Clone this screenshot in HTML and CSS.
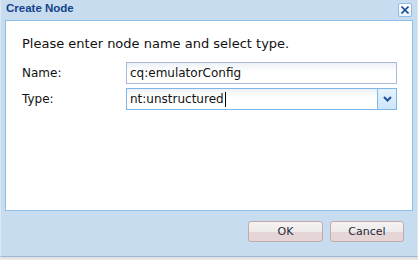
FILE: index.html
```html
<!DOCTYPE html>
<html lang="en">
  <head>
    <meta charset="UTF-8" />
    <title>Create Node</title>
    <link rel="stylesheet" href="styles.css">
  </head>

  <body>
    <div class="dialog">
      <div class="header">
        <span class="title">Create Node</span>
        <span class="close">
          <svg width="8" height="8" viewBox="0 0 8 8">
            <path d="M0.5 0.5 L7.5 7.5 M7.5 0.5 L0.5 7.5" stroke="#1d4f9a" stroke-width="1.6" />
          </svg>
        </span>
      </div>

      <div class="body">
        <p class="intro">Please enter node name and select type.</p>
        <div class="row">
          <span class="label">Name:</span>
          <div class="field">cq:emulatorConfig</div>
        </div>
        <div class="row">
          <span class="label">Type:</span>
          <div class="field combo">
            <span class="value">nt:unstructured<span class="caret"></span></span>
            <span class="trigger">
              <svg width="9" height="6" viewBox="0 0 9 6">
                <path d="M1 1 L4.5 4.5 L8 1" fill="none" stroke="#1d4f9a" stroke-width="2" />
              </svg>
            </span>
          </div>
        </div>
      </div>

      <div class="footer">
        <span class="btn ok">OK</span>
        <span class="btn">Cancel</span>
      </div>
    </div>
  </body>
</html>
```

FILE: styles.css
```css
* {
  margin: 0;
  padding: 0;
  box-sizing: border-box;
}

body {
  width: 418px;
  height: 260px;
  font-family: "DejaVu Sans", Verdana, sans-serif;
  background: linear-gradient(#b8c2cc 0, #d9d9d9 256px, #ececec 260px);
  overflow: hidden;
}

.dialog {
  width: 418px;
  height: 257px;
  padding: 0 4px;
  display: flex;
  flex-direction: column;
  background-color: #c7dcee;
  border-style: solid;
  border-width: 0 1px 1px 1px;
  border-color: #dce8f3 #dde9f4 #9db8d2 #dce8f3;
}

.header {
  height: 20px;
  padding-left: 1px;
  display: flex;
  justify-content: space-between;
}

.title {
  font-family: "Liberation Sans", Arial, sans-serif;
  font-size: 11.5px;
  font-weight: bold;
  line-height: 16px;
  color: #15428b;
}

.close {
  width: 14px;
  height: 14px;
  margin: 3px 1px 0 0;
  display: flex;
  align-items: center;
  justify-content: center;
  background: linear-gradient(#ffffff, #eaf3fc);
  border: 1px solid #8fbde6;
  border-radius: 2px;
}

.body {
  height: 191px;
  padding: 15px 15px 0 16px;
  background-color: #fff;
  border: 1px solid #8cc0ea;
  font-size: 12px;
  color: #111;
}

.intro {
  font-size: 13px;
  line-height: 15px;
  margin-bottom: 11px;
}

.row {
  display: flex;
  align-items: center;
  margin-bottom: 4px;
}

.label {
  width: 104px;
}

.field {
  flex: 1;
  height: 22px;
  padding-left: 3px;
  display: flex;
  align-items: center;
  background: linear-gradient(#edf1f6 0, #ffffff 9px);
  border: 1px solid #a9b9d9;
}

.combo {
  border-color: #7eb8ea;
  padding-right: 0;
}

.value {
  flex: 1;
  display: flex;
  align-items: center;
}

.caret {
  width: 1px;
  height: 15px;
  margin-left: 1px;
  background-color: #000;
}

.trigger {
  width: 19px;
  height: 20px;
  display: flex;
  align-items: center;
  justify-content: center;
  background: linear-gradient(#e3f2fd, #cfe6fa);
  border-left: 1px solid #7eb8ea;
}

.footer {
  flex: 1;
  padding: 10px 9px 0 0;
  display: flex;
  justify-content: flex-end;
  gap: 7px;
}

.btn {
  width: 74px;
  height: 21px;
  display: flex;
  align-items: center;
  justify-content: center;
  font-size: 11px;
  color: #1f2a3a;
  background: linear-gradient(#f6f2f2 0, #f0ebeb 50%, #e6d5d6 52%, #e6d5d6 100%);
  border: 1px solid #c2a9ac;
  border-radius: 3px;
}

.ok {
  width: 75px;
}
```
